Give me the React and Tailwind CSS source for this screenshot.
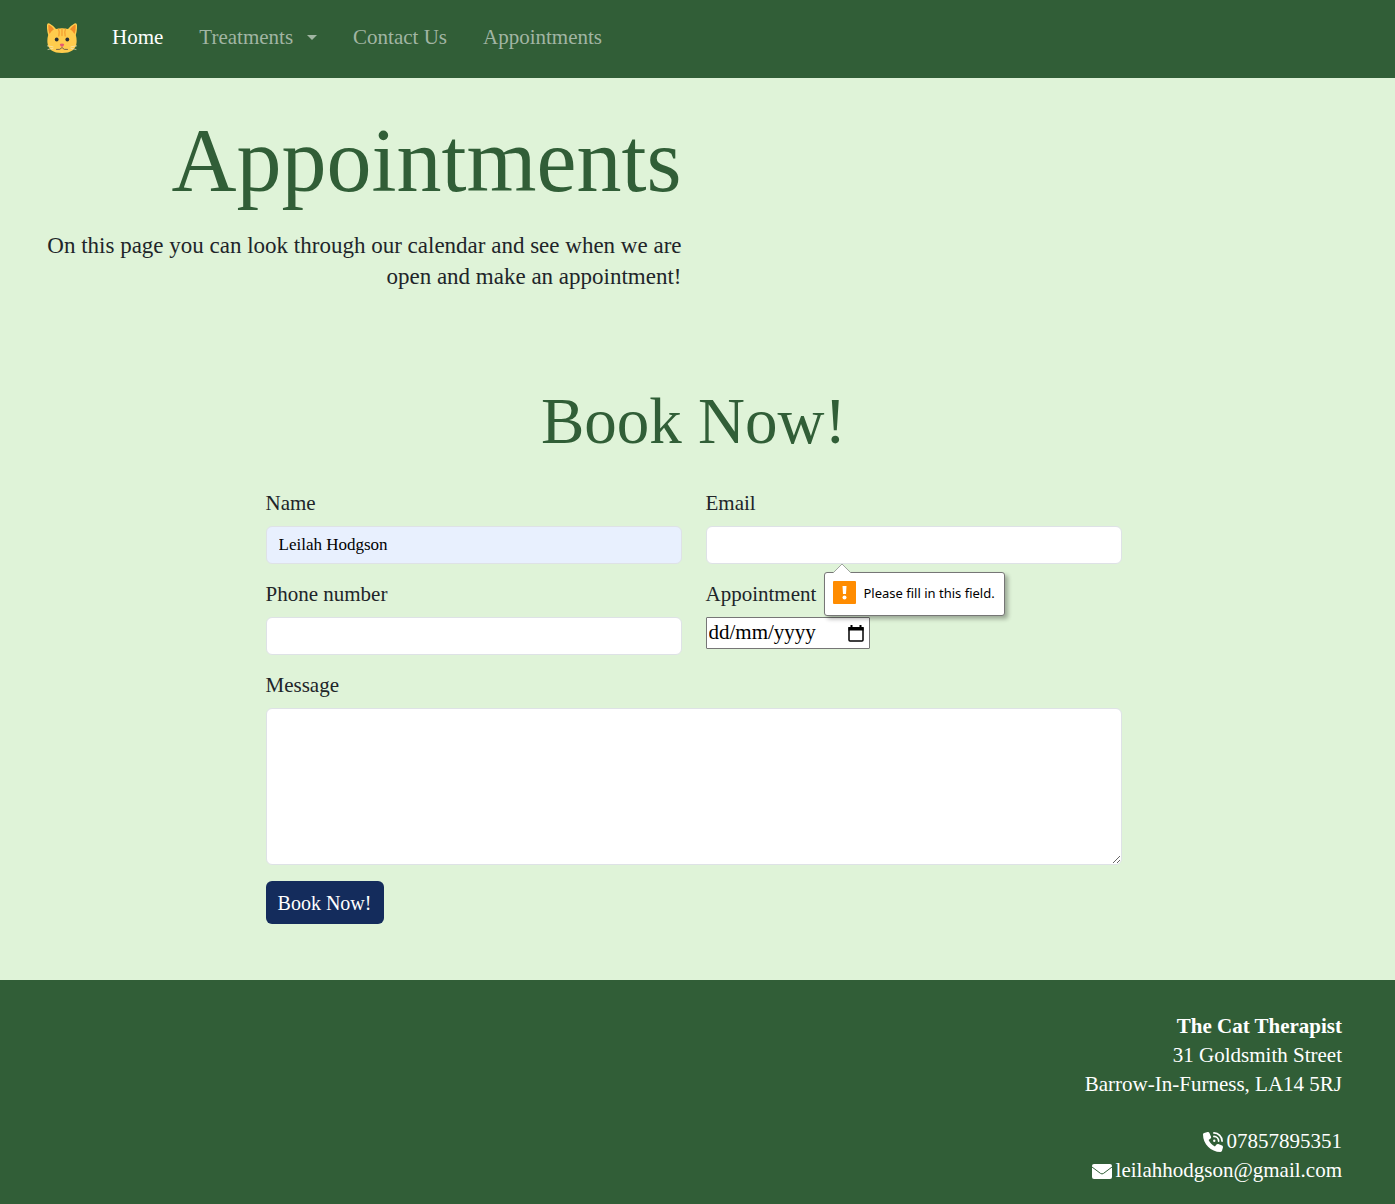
import React from "react";

function CatIcon() {
  return (
    <svg viewBox="0 0 30 30" className="size-[30px]" role="img" aria-label="Cat">
      <path d="M0 2Q.3 -.5 2.500 .6Q6 2.500 9 6Q15 4.500 21 6Q24 2.500 27.500 .6Q29.700 -.5 30 2Q30.300 7 28.800 12Q30 16 29.500 20Q28.500 30 15 30Q1.500 30 .5 20Q0 16 1.200 12Q-.3 7 0 2Z" fill="#ffcc4d" />
      <path d="M1.300 2.500Q1.500 1.500 2.500 2Q5 3.500 7 6.300Q4 8 2.500 11Q1 6.500 1.300 2.500ZM28.700 2.500Q28.500 1.500 27.500 2Q25 3.500 23 6.300Q26 8 27.500 11Q29 6.500 28.700 2.500Z" fill="#f28c28" />
      <path d="M15 6V12.500M11.500 6.200Q13 9 11.800 13M18.500 6.200Q17 9 18.200 13" stroke="#f4a030" strokeWidth="1.300" fill="none" strokeLinecap="round" />
      <circle cx="9.700" cy="16.500" r="1.900" fill="#292f33" />
      <circle cx="20.300" cy="16.500" r="1.900" fill="#292f33" />
      <path d="M12.800 21Q15 20.200 17.200 21Q17 23.500 15 24Q13 23.500 12.800 21Z" fill="#e75a70" />
      <path d="M9.500 26.500Q13.500 27.200 15 24.500Q16.500 27.200 20.500 26.500" stroke="#66564a" strokeWidth=".9" fill="none" strokeLinecap="round" />
      <path d="M0 22.800L6 23.800M1 26.500L6 25.300M30 22.800L24 23.800M29 26.500L24 25.300" stroke="#f7e9bd" strokeWidth=".7" strokeLinecap="round" />
    </svg>
  );
}

function PhoneIcon() {
  return (
    <svg viewBox="0 0 512 512" className="size-5 shrink-0" fill="none" aria-hidden="true">
      <path fill="currentColor" d="M164.900 24.600c-7.700-18.600-28-28.500-47.400-23.200l-88 24C12.100 30.200 0 46 0 64C0 311.400 200.600 512 448 512c18 0 33.800-12.100 38.600-29.500l24-88c5.300-19.400-4.600-39.700-23.200-47.400l-96-40c-16.300-6.800-35.200-2.100-46.300 11.600L304.700 368C234.300 334.700 177.300 277.700 144 207.300L193.300 167c13.700-11.200 18.400-30 11.600-46.300l-40-96z" />
      <path d="M280 24A208 208 0 0 1 488 232M280 112A120 120 0 0 1 400 232" stroke="currentColor" strokeWidth="44" strokeLinecap="round" />
      <circle cx="288" cy="224" r="30" fill="currentColor" />
    </svg>
  );
}

function MailIcon() {
  return (
    <svg viewBox="0 0 20 20" className="size-5 shrink-0" fill="none" aria-hidden="true">
      <rect y="3" width="20" height="15" rx="2" fill="currentColor" />
      <path d="M0 6L8.500 12.400Q10 13.500 11.500 12.400L20 6" stroke="#315e37" strokeWidth="1" />
    </svg>
  );
}

const field = "block h-[38px] w-full rounded-md border border-[#dee2e6] bg-white px-3 text-[17px] text-black";
const label = "mb-2 block h-[29px] text-[21px] leading-[29px]";

export default function App() {
  return (
    <div className="flex min-h-screen flex-col bg-[#dff3d8] font-['Liberation_Serif',serif] text-[#212529]">
      <nav className="flex h-[78px] items-start bg-[#315e37] pl-[47px] pt-[23px] text-[21px] leading-7 text-[#a1b5a3]">
        <a href="#home" className="mr-[35px]"><CatIcon /></a>
        <div className="flex gap-9">
          <a href="#home" className="text-white">Home</a>
          <button type="button" className="flex items-center">
            Treatments
            <span className="ml-3.5 border-x-[5px] border-t-[5px] border-x-transparent border-t-current" />
          </button>
          <a href="#contact">Contact Us</a>
          <a href="#appointments">Appointments</a>
        </div>
      </nav>

      <main className="grow pb-12">
        <header className="w-1/2 pl-9 pr-4 pt-10 text-right">
          <h1 className="text-[90px] leading-[86px] text-[#315e37]">Appointments</h1>
          <p className="mt-[26px] text-[23px] leading-[31px]">On this page you can look through our calendar and see when we are open and make an appointment!</p>
        </header>

        <section className="mt-[87px] pr-2">
          <div className="mx-auto w-full max-w-[856px]">
            <h2 className="text-center text-[65px] leading-[84px] text-[#315e37]">Book Now!</h2>
            <form className="mt-[26px] grid grid-cols-2 gap-x-6 gap-y-4">
              <div>
                <label htmlFor="name" className={label}>Name</label>
                <input id="name" defaultValue="Leilah Hodgson" className="block h-[38px] w-full rounded-md border border-[#dee2e6] bg-[#e8f0fe] px-3 text-[17px] text-black" />
              </div>
              <div className="relative">
                <label htmlFor="email" className={label}>Email</label>
                <input id="email" type="email" className={field} />
                <div role="alert" className="absolute left-[118px] top-[83px] z-10 flex h-11 w-[181px] items-center gap-2 rounded-[3px] border border-[#767676] bg-white pl-2 font-['Noto_Sans',sans-serif] text-[13px] text-black shadow-[3px_3px_4px_rgba(0,0,0,0.3)]">
                  <svg viewBox="0 0 18 9" className="absolute -top-[9px] left-2 h-[9px] w-[18px] overflow-visible" aria-hidden="true">
                    <path d="M0 10V9L9 0L18 9V10" fill="white" />
                    <path d="M0 9L9 0L18 9" fill="none" stroke="#a0a5a0" />
                  </svg>
                  <svg viewBox="0 0 23 23" className="mb-[3px] size-[23px] shrink-0" aria-hidden="true">
                    <rect width="23" height="23" rx="1" fill="#ff8c00" />
                    <path d="M9.500 5H13.500L13 13H10Z" fill="white" />
                    <circle cx="11.500" cy="16.500" r="2" fill="white" />
                  </svg>
                  <span className="whitespace-nowrap">Please fill in this field.</span>
                </div>
              </div>
              <div>
                <label htmlFor="phone" className={label}>Phone number</label>
                <input id="phone" type="tel" className={field} />
              </div>
              <div>
                <label htmlFor="date" className={label}>Appointment</label>
                <div className="flex h-8 w-[164px] items-center rounded-[1px] border border-[#767676] bg-white">
                  <input id="date" placeholder="dd/mm/yyyy" className="w-full min-w-0 pl-0.5 text-[21px] text-black placeholder:text-black" />
                  <button type="button" aria-label="Choose a date" className="mr-[5px] shrink-0">
                    <svg viewBox="0 0 16 17" className="h-[17px] w-4" fill="none" aria-hidden="true">
                      <path d="M1 3V15Q1 16 2 16H14Q15 16 15 15V3Z" stroke="black" strokeWidth="1.500" />
                      <path d="M.5 2H15.500V5.500H.5ZM2.500 0H4.500V3H2.500ZM11.500 0H13.500V3H11.500Z" fill="black" />
                    </svg>
                  </button>
                </div>
              </div>
              <div className="col-span-2">
                <label htmlFor="message" className={label}>Message</label>
                <textarea id="message" className="block h-[157px] w-full rounded-md border border-[#dee2e6] bg-white px-3 py-1.5 text-[17px]" />
              </div>
              <button type="submit" className="h-[43px] w-[118px] rounded-md bg-[#142c5c] text-[20px] text-white">Book Now!</button>
            </form>
          </div>
        </section>
      </main>

      <footer className="bg-[#315e37] pb-[19px] pr-[53px] pt-8 text-right text-[21px] leading-[29px] text-white">
        <address className="not-italic">
          <strong>The Cat Therapist</strong><br />
          31 Goldsmith Street<br />
          Barrow-In-Furness, LA14 5RJ
        </address>
        <a href="tel:07857895351" className="mt-7 flex items-center justify-end gap-1"><PhoneIcon />07857895351</a>
        <a href="mailto:leilahhodgson@gmail.com" className="flex items-center justify-end gap-1"><MailIcon />leilahhodgson@gmail.com</a>
      </footer>
    </div>
  );
}
